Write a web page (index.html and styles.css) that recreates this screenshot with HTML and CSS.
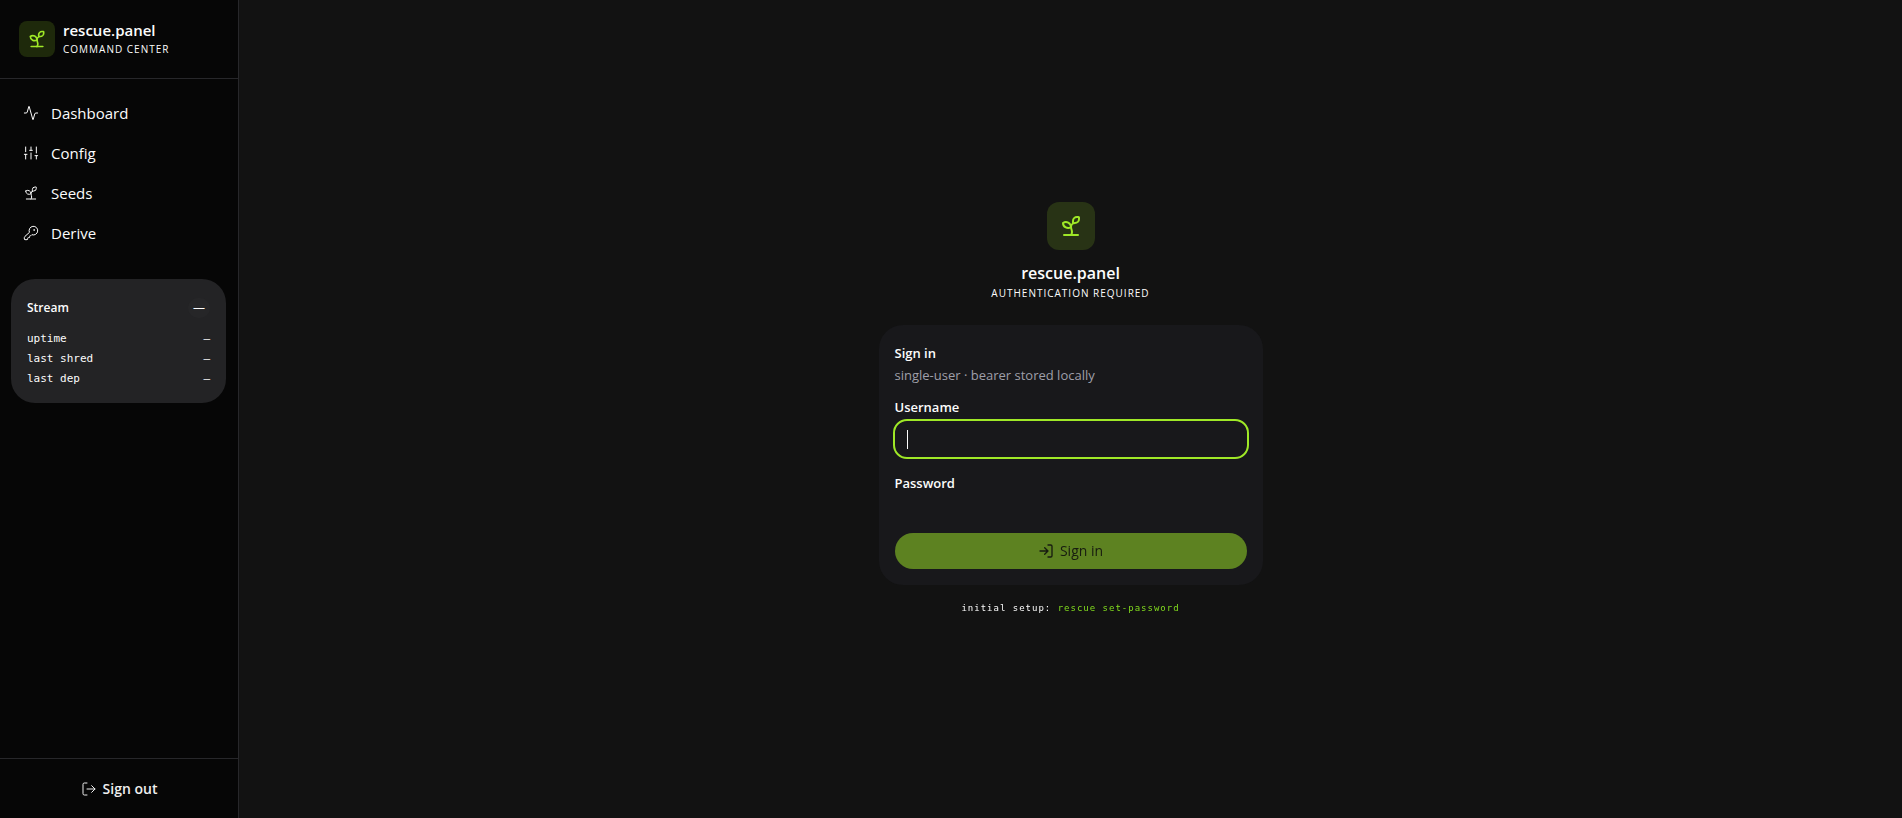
FILE: index.html
```html
<!DOCTYPE html>
<html lang="en">
<head>
  <meta charset="UTF-8">
  <meta name="viewport" content="width=device-width, initial-scale=1">
  <title>rescue.panel</title>
  <link rel="stylesheet" href="styles.css">
</head>
<body>

<svg class="sprite" aria-hidden="true">
  <symbol id="icon-sprout" viewBox="0 0 24 24">
    <path d="M14 9.536V7a4 4 0 0 1 4-4h1.500a.5.5 0 0 1 .5.5V5a4 4 0 0 1-4 4 4 4 0 0 0-4 4c0 2 1 3 1 5a5 5 0 0 1-1 3"/>
    <path d="M4 9a5 5 0 0 1 8 4 5 5 0 0 1-8-4"/>
    <path d="M5 21h14"/>
  </symbol>
</svg>

<div class="app">
  <aside class="sidebar">
    <div class="brand">
      <div class="logo"><svg class="icon"><use href="#icon-sprout"/></svg></div>
      <div class="brand-text">
        <div class="brand-name">rescue.panel</div>
        <div class="brand-sub">Command Center</div>
      </div>
    </div>

    <nav class="nav">
      <a href="#dashboard">
        <svg class="icon" viewBox="0 0 24 24"><path d="M22 12h-2.480a2 2 0 0 0-1.930 1.460l-2.350 8.360a.25.25 0 0 1-.48 0L9.240 2.180a.25.25 0 0 0-.48 0l-2.350 8.360A2 2 0 0 1 4.490 12H2"/></svg>
        Dashboard
      </a>
      <a href="#config">
        <svg class="icon" viewBox="0 0 24 24"><path d="M4 21v-7M4 10V3M12 21v-9M12 8V3M20 21v-5M20 12V3M2 14h4M10 8h4M18 16h4"/></svg>
        Config
      </a>
      <a href="#seeds">
        <svg class="icon"><use href="#icon-sprout"/></svg>
        Seeds
      </a>
      <a href="#derive">
        <svg class="icon" viewBox="0 0 24 24"><path d="M2.586 17.414A2 2 0 0 0 2 18.828V21a1 1 0 0 0 1 1h3a1 1 0 0 0 1-1v-1a1 1 0 0 1 1-1h1a1 1 0 0 0 1-1v-1a1 1 0 0 1 1-1h.172a2 2 0 0 0 1.414-.586l.814-.814a6.500 6.500 0 1 0-4-4z"/><circle cx="16.500" cy="7.500" r=".5"/></svg>
        Derive
      </a>
    </nav>

    <section class="stream">
      <div class="stream-head">
        <h2>Stream</h2>
        <span class="chip">—</span>
      </div>
      <dl class="stats">
        <div><dt>uptime</dt><dd>—</dd></div>
        <div><dt>last shred</dt><dd>—</dd></div>
        <div><dt>last dep</dt><dd>—</dd></div>
      </dl>
    </section>

    <div class="sidebar-foot">
      <button type="button" class="btn-signout">
        <svg class="icon" viewBox="0 0 24 24"><path d="m16 17 5-5-5-5M21 12H9M9 21H5a2 2 0 0 1-2-2V5a2 2 0 0 1 2-2h4"/></svg>
        Sign out
      </button>
    </div>
  </aside>

  <main class="main">
    <div class="auth">
      <div class="logo logo-lg"><svg class="icon"><use href="#icon-sprout"/></svg></div>
      <h1>rescue.panel</h1>
      <p class="auth-sub">Authentication required</p>

      <form class="card">
        <h2>Sign in</h2>
        <p class="card-desc">single-user · bearer stored locally</p>

        <div class="field">
          <label for="username">Username</label>
          <input type="text" id="username" placeholder=" " autocomplete="username" autofocus>
        </div>
        <div class="field">
          <label for="password">Password</label>
          <input type="password" id="password" placeholder=" " autocomplete="current-password">
        </div>

        <button type="submit" class="btn-signin" disabled>
          <svg class="icon" viewBox="0 0 24 24"><path d="m10 17 5-5-5-5M15 12H3M15 3h4a2 2 0 0 1 2 2v14a2 2 0 0 1-2 2h-4"/></svg>
          Sign in
        </button>
      </form>

      <p class="hint">initial setup: <code>rescue set-password</code></p>
    </div>
  </main>
</div>

</body>
</html>
```

FILE: styles.css
```css
* {
  margin: 0;
  padding: 0;
  box-sizing: border-box;
}

:root {
  --accent: #9fe827;
  --border: #27272a;
  --mono: "DejaVu Sans Mono", "Liberation Mono", monospace;
}

body {
  font-family: "Segoe UI", "Open Sans", "Noto Sans", sans-serif;
  font-size: 15px;
  line-height: 20px;
  background: #121212;
  color: #fcfcfc;
}

button,
input {
  font: inherit;
  color: inherit;
  border: none;
  background: none;
}

.sprite {
  display: none;
}

.icon {
  width: 16px;
  height: 16px;
  flex-shrink: 0;
  fill: none;
  stroke: currentColor;
  stroke-width: 2;
  stroke-linecap: round;
  stroke-linejoin: round;
}

.app {
  display: flex;
  min-height: 100vh;
}

/* sidebar */
.sidebar {
  width: 239px;
  flex-shrink: 0;
  display: flex;
  flex-direction: column;
  background: #060606;
  border-right: 1px solid var(--border);
}

.brand {
  display: flex;
  align-items: center;
  gap: 8px;
  padding: 20px 19px;
  border-bottom: 1px solid var(--border);
}

.logo {
  width: 36px;
  height: 36px;
  display: flex;
  align-items: center;
  justify-content: center;
  border-radius: 8px;
  background: #1e290b;
  color: var(--accent);
}

.logo .icon {
  width: 20px;
  height: 20px;
}

.brand-name {
  font-weight: 600;
  line-height: 20px;
}

.brand-sub,
.auth-sub {
  font-size: 10px;
  line-height: 18px;
  letter-spacing: 1px;
  text-transform: uppercase;
}

.nav {
  display: flex;
  flex-direction: column;
  gap: 4px;
  padding: 16px 11px;
}

.nav a {
  display: flex;
  align-items: center;
  gap: 12px;
  height: 36px;
  padding: 0 12px;
  color: inherit;
  text-decoration: none;
}

.nav .icon,
.btn-signout .icon {
  stroke-width: 1.5;
}

.stream {
  margin: 12px 12px 0 11px;
  padding: 18px 16px 14px;
  border-radius: 24px;
  background: #232325;
}

.stream-head {
  display: flex;
  align-items: center;
  justify-content: space-between;
  margin-bottom: 10px;
  line-height: 22px;
}

.stream-head h2 {
  font-size: 12px;
  font-weight: 600;
}

.chip {
  padding: 0 5px;
  border-radius: 10px;
  background: #262628;
  font-size: 12px;
  line-height: 20px;
}

.stats {
  font-family: var(--mono);
  font-size: 11px;
}

.stats div {
  display: flex;
  justify-content: space-between;
}

.sidebar-foot {
  margin-top: auto;
  padding: 12px 12px 11px;
  border-top: 1px solid var(--border);
}

.btn-signout {
  width: 100%;
  height: 36px;
  display: flex;
  align-items: center;
  justify-content: center;
  gap: 6px;
  color: #eee;
  font-size: 14px;
  font-weight: 600;
  cursor: pointer;
}

/* sign in */
.main {
  flex: 1;
  display: flex;
  align-items: center;
  justify-content: center;
  padding: 16px;
}

.auth {
  width: 100%;
  max-width: 384px;
  display: flex;
  flex-direction: column;
  align-items: center;
}

.logo-lg {
  width: 48px;
  height: 48px;
  margin-bottom: 12px;
  border-radius: 12px;
  background: #283315;
}

.logo-lg .icon {
  width: 24px;
  height: 24px;
}

.auth h1 {
  font-size: 16px;
  font-weight: 600;
  line-height: 22px;
}

.card {
  width: 100%;
  margin: 23px 0 16px;
  padding: 16px;
  border-radius: 24px;
  background: #18181b;
  font-size: 13px;
}

.card h2 {
  font-size: 13px;
  font-weight: 600;
  line-height: 24px;
}

.card-desc {
  color: #9f9fa9;
}

.field {
  margin-top: 12px;
}

.field + .field {
  margin-top: 16px;
}

.field label {
  display: block;
  margin-bottom: 4px;
  font-weight: 600;
}

.field input {
  display: block;
  width: 100%;
  height: 36px;
  padding: 0 12px;
  border-radius: 12px;
  font-size: 14px;
}

.field input:focus {
  outline: 2px solid var(--accent);
}

/* steady caret while the field is empty */
.field input:focus:placeholder-shown {
  caret-color: transparent;
  background: linear-gradient(#fcfcfc, #fcfcfc) no-repeat 12px center / 1px 19px;
}

.btn-signin {
  width: 100%;
  height: 36px;
  display: flex;
  align-items: center;
  justify-content: center;
  gap: 6px;
  border-radius: 18px;
  background: #5d8221;
  color: #171b10;
  font-size: 14px;
  font-weight: 500;
}

.hint {
  font-family: var(--mono);
  font-size: 9px;
  line-height: 15px;
  letter-spacing: 1px;
}

.hint code {
  font-family: inherit;
  color: #82dc1e;
}
```
